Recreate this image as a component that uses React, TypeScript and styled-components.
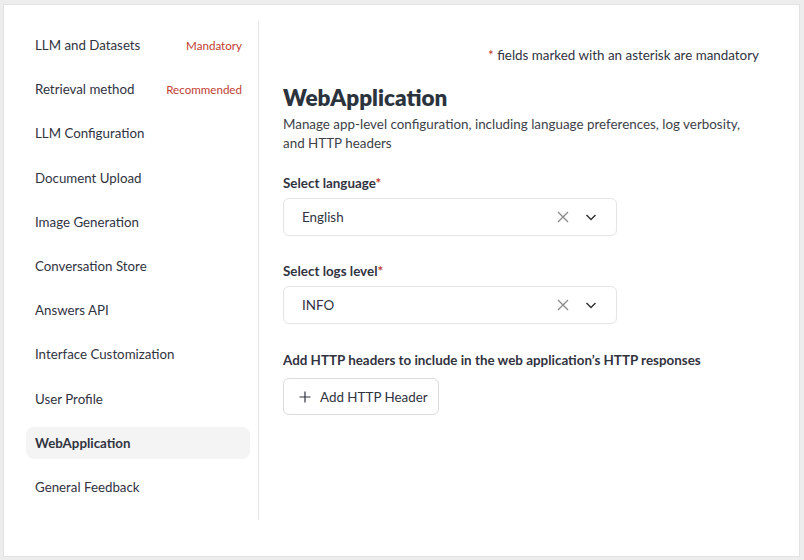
import React from "react";
import styled, { createGlobalStyle } from "styled-components";

const Global = createGlobalStyle`
  html, body { margin: 0; padding: 0; background: #ededed; }
  body { font-family: "Lato", "Noto Sans", sans-serif; color: #31333f; }
  * { box-sizing: border-box; }
`;

const Page = styled.div`
  width: 804px;
  height: 560px;
  padding: 4px 4px 3px 3px;
`;

const Card = styled.div`
  width: 100%;
  height: 100%;
  background: #fff;
  border: 1px solid #e2e2e2;
  display: flex;
  padding: 16px 0 36px 22px;
`;

const Sidebar = styled.nav`
  width: 233px;
  display: flex;
  flex-direction: column;
  gap: 12px;
  padding: 8px 8px 0 0;
  border-right: 1px solid #e6e6e6;
`;

const NavItem = styled.div<{ $active?: boolean }>`
  height: 32.2px;
  flex: none;
  display: flex;
  align-items: center;
  justify-content: space-between;
  padding: 0 8px 0 9px;
  border-radius: 8px;
  font-size: 13.3px;
  color: #31333f;
  font-weight: ${(p) => (p.$active ? 700 : 400)};
  background: ${(p) => (p.$active ? "#f4f4f4" : "transparent")};
`;

const Badge = styled.span`
  font-size: 11.6px;
  color: #bf4030;
`;

const Main = styled.main`
  flex: 1;
  padding: 26px 40px 0 24px;
  display: flex;
  flex-direction: column;
`;

const Note = styled.div`
  align-self: flex-end;
  font-size: 13.4px;
  color: #31333f;
`;

const Star = styled.span`
  color: #c0392b;
`;

const Title = styled.h1`
  margin: 20px 0 0;
  font-size: 22.5px;
  font-weight: 800;
  color: #2b333d;
  line-height: 30px;
`;

const Desc = styled.p`
  margin: 2px 0 0;
  font-size: 13.4px;
  line-height: 19px;
  color: #3d4148;
  max-width: 475px;
`;

const Label = styled.div<{ $top: number }>`
  margin-top: ${(p) => p.$top}px;
  font-size: 13.4px;
  font-weight: 700;
  color: #31333f;
  line-height: 20px;
`;

const Select = styled.div`
  margin-top: 5px;
  width: 334px;
  height: 38px;
  border: 1px solid #e4e4e4;
  border-radius: 6px;
  display: flex;
  align-items: center;
  padding: 0 18px 0 18px;
  font-size: 13.4px;
  color: #31333f;
`;

const Value = styled.span`
  flex: 1;
`;

const Icons = styled.div`
  display: flex;
  align-items: center;
  gap: 14px;
`;

const Button = styled.button`
  margin-top: 8px;
  align-self: flex-start;
  height: 37px;
  padding: 0 10px 0 15px;
  border: 1px solid #dcdcdc;
  border-radius: 6px;
  background: #fff;
  display: flex;
  align-items: center;
  gap: 9px;
  font-family: inherit;
  font-size: 13.4px;
  color: #31333f;
`;

const XIcon = () => (
  <svg width="14" height="14" viewBox="0 0 14 14">
    <path d="M2 2 L12 12 M12 2 L2 12" stroke="#8a8a8a" strokeWidth="1.3" fill="none" />
  </svg>
);

const Chevron = () => (
  <svg width="14" height="14" viewBox="0 0 14 14">
    <path d="M2.5 5 L7 9.5 L11.5 5" stroke="#333" strokeWidth="1.5" fill="none" />
  </svg>
);

const Plus = () => (
  <svg width="12" height="12" viewBox="0 0 12 12">
    <path d="M6 0.5 V11.5 M0.5 6 H11.5" stroke="#31333f" strokeWidth="1.2" fill="none" />
  </svg>
);

const items: { label: string; badge?: string; active?: boolean }[] = [
  { label: "LLM and Datasets", badge: "Mandatory" },
  { label: "Retrieval method", badge: "Recommended" },
  { label: "LLM Configuration" },
  { label: "Document Upload" },
  { label: "Image Generation" },
  { label: "Conversation Store" },
  { label: "Answers API" },
  { label: "Interface Customization" },
  { label: "User Profile" },
  { label: "WebApplication", active: true },
  { label: "General Feedback" },
];

export default function App() {
  return (
    <>
      <Global />
      <Page>
        <Card>
          <Sidebar>
            {items.map((it) => (
              <NavItem key={it.label} $active={it.active}>
                <span>{it.label}</span>
                {it.badge && <Badge>{it.badge}</Badge>}
              </NavItem>
            ))}
          </Sidebar>
          <Main>
            <Note>
              <Star>*</Star> fields marked with an asterisk are mandatory
            </Note>
            <Title>WebApplication</Title>
            <Desc>
              Manage app-level configuration, including language preferences, log verbosity,
              and HTTP headers
            </Desc>
            <Label $top={20}>
              Select language<Star>*</Star>
            </Label>
            <Select>
              <Value>English</Value>
              <Icons>
                <XIcon />
                <Chevron />
              </Icons>
            </Select>
            <Label $top={25}>
              Select logs level<Star>*</Star>
            </Label>
            <Select>
              <Value>INFO</Value>
              <Icons>
                <XIcon />
                <Chevron />
              </Icons>
            </Select>
            <Label $top={26}>
              Add HTTP headers to include in the web application’s HTTP responses
            </Label>
            <Button>
              <Plus />
              Add HTTP Header
            </Button>
          </Main>
        </Card>
      </Page>
    </>
  );
}
